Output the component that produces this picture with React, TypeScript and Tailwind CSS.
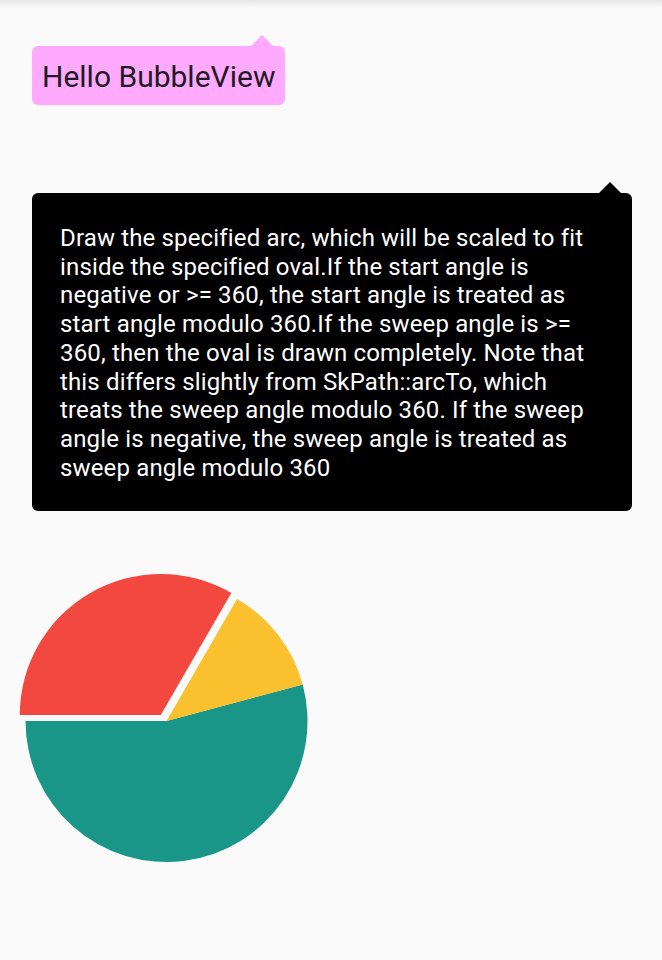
import React from 'react';

const BODY =
  'Draw the specified arc, which will be scaled to fit inside the specified oval.If the start angle is negative or >= 360, the start angle is treated as start angle modulo 360.If the sweep angle is >= 360, then the oval is drawn completely. Note that this differs slightly from SkPath::arcTo, which treats the sweep angle modulo 360. If the sweep angle is negative, the sweep angle is treated as sweep angle modulo 360';

const Arrow = ({ color, className }: { color: string; className: string }) => (
  <svg className={className} width="24" height="13" viewBox="0 0 24 13">
    <polygon points="0,13 12,1 24,13" fill={color} />
  </svg>
);

const Pie = () => {
  // center and radius of the chart, in svg coords
  const cx = 166.5;
  const cy = 161;
  const r = 141;
  const pt = (x: number, y: number, deg: number) => {
    const a = (deg * Math.PI) / 180;
    return `${(x + r * Math.cos(a)).toFixed(1)} ${(y - r * Math.sin(a)).toFixed(1)}`;
  };
  // red slice is pulled out a bit
  const rx = cx - 5.7;
  const ry = cy - 6;

  return (
    <svg width="330" height="320" viewBox="0 0 330 320" className="block mt-[49px]">
      <path d={`M ${cx} ${cy} L ${pt(cx, cy, 180)} A ${r} ${r} 0 1 0 ${pt(cx, cy, 15)} Z`} fill="#199688" />
      <path d={`M ${cx} ${cy} L ${pt(cx, cy, 15)} A ${r} ${r} 0 0 0 ${pt(cx, cy, 60)} Z`} fill="#fbc02d" />
      <path d={`M ${rx} ${ry} L ${pt(rx, ry, 60)} A ${r} ${r} 0 0 0 ${pt(rx, ry, 180)} Z`} fill="#f24840" />
    </svg>
  );
};

export default function App() {
  return (
    <div className="min-h-screen w-[662px] bg-[#fafafa] relative font-['Roboto',sans-serif]">
      <div className="absolute top-0 left-0 right-0 h-[8px] bg-gradient-to-b from-[#e6e6e6] to-[#fafafa]" />

      <div className="pt-[46px] pl-[32px]">
        <div className="relative inline-block bg-[#ffaaff] rounded-[6px] pl-[10px] pr-[10px] pt-[14px] pb-[11px]">
          <Arrow color="#ffaaff" className="absolute left-[218px] top-[-12px]" />
          <span className="block text-[30px] leading-[34px] text-[#221a22] whitespace-nowrap">Hello BubbleView</span>
        </div>

        <div className="relative w-[600px] mt-[88px] bg-black rounded-[6px] pl-[28px] pr-[28px] pt-[31px] pb-[29px]">
          <Arrow color="#000000" className="absolute left-[566px] top-[-12px]" />
          <p className="text-[24px] leading-[28.7px] tracking-[0.15px] text-white">{BODY}</p>
        </div>
      </div>

      <Pie />
    </div>
  );
}
